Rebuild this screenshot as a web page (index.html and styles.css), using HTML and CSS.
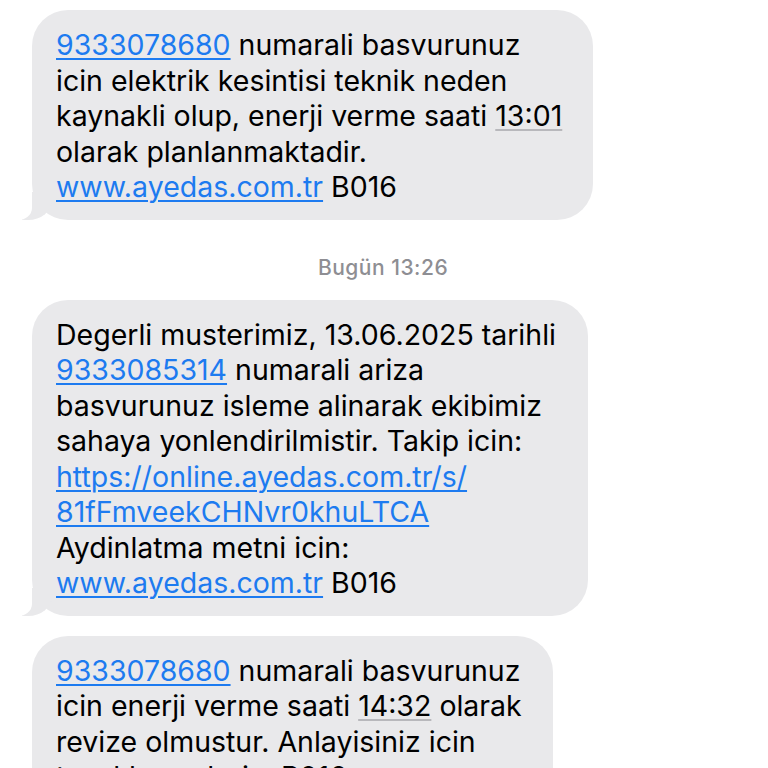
FILE: index.html
```html
<!DOCTYPE html>
<html>
<head>
<meta charset="utf-8">
<link rel="stylesheet" href="styles.css">
</head>
<body>
<div class="thread">
  <div class="bubble b1">
    <p class="msg"><a class="link">9333078680</a> numarali basvurunuz<br>icin elektrik kesintisi teknik neden<br>kaynakli olup, enerji verme saati <span class="time">13:01</span><br>olarak planlanmaktadir.<br><a class="link">www.ayedas.com.tr</a> B016</p>
  </div>
  <div class="stamp">Bugün 13:26</div>
  <div class="bubble b2">
    <p class="msg">Degerli musterimiz, 13.06.2025 tarihli<br><a class="link">9333085314</a> numarali ariza<br>basvurunuz isleme alinarak ekibimiz<br>sahaya yonlendirilmistir. Takip icin:<br><a class="link">https://online.ayedas.com.tr/s/<br>81fFmveekCHNvr0khuLTCA</a><br>Aydinlatma metni icin:<br><a class="link">www.ayedas.com.tr</a> B016</p>
  </div>
  <div class="bubble b3">
    <p class="msg"><a class="link">9333078680</a> numarali basvurunuz<br>icin enerji verme saati <span class="time">14:32</span> olarak<br>revize olmustur. Anlayisiniz icin<br>tesekkur ederiz. B016</p>
  </div>
</div>
</body>
</html>
```
FILE: styles.css
```css
html, body {
  margin: 0;
  padding: 0;
  background: #ffffff;
}
body {
  font-family: Inter, "Noto Sans", sans-serif;
  color: #000;
  overflow: hidden;
  height: 768px;
}
.thread {
  display: flex;
  flex-direction: column;
  align-items: flex-start;
  padding: 10px 0 0 32px;
}
.bubble {
  position: relative;
  background: #e9e9eb;
  border-radius: 36px;
  padding: 17px 24px 15px 24px;
  box-sizing: border-box;
}
.bubble::before {
  content: "";
  position: absolute;
  left: -10px;
  bottom: 0;
  width: 30px;
  height: 28px;
  background: #e9e9eb;
  border-bottom-right-radius: 24px 20px;
}
.bubble::after {
  content: "";
  position: absolute;
  left: -20px;
  bottom: 0;
  width: 20px;
  height: 30px;
  background: #ffffff;
  border-bottom-right-radius: 14px 12px;
}
.b1 { width: 561px; }
.b2 { width: 556px; }
.b3 { width: 521px; margin-top: 20px; }
.msg {
  margin: 0;
  font-size: 28.5px;
  line-height: 35.5px;
  white-space: nowrap;
  letter-spacing: 0;
}
.link {
  color: #1d7bf0;
  text-decoration: underline;
  text-decoration-thickness: 2px;
  text-underline-offset: 3px;
}
.time {
  text-decoration: underline;
  text-decoration-color: #b8b8bc;
  text-decoration-thickness: 2px;
  text-underline-offset: 3px;
}
.stamp {
  align-self: stretch;
  text-align: center;
  margin: 36px 0 20px 0;
  padding-right: 34px;
  font-size: 21px;
  font-weight: 500;
  letter-spacing: 0.5px;
  color: #8e8e93;
  line-height: 24px;
}
```
